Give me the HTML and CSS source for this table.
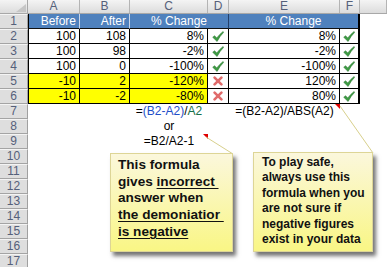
FILE: index.html
```html
<!DOCTYPE html>
<html>
<head>
<meta charset="utf-8">
<link rel="stylesheet" href="styles.css">
</head>
<body>
<div class="page">
  <div class="sheet">
    <div class="row colhead">
      <div class="corner"><span class="tri"></span></div>
      <div class="ch">A</div>
      <div class="ch">B</div>
      <div class="ch">C</div>
      <div class="ch">D</div>
      <div class="ch">E</div>
      <div class="ch">F</div>
      <div class="ch"></div>
    </div>
    <div class="row">
      <div class="rh">1</div>
      <div class="c hd sepw first">Before</div>
      <div class="c hd sepw">After</div>
      <div class="c hd span2 sepd ctr">% Change</div>
      <div class="c hd span2 last ctr">% Change</div>
      <div class="c"></div>
    </div>
    <div class="row">
      <div class="rh">2</div>
      <div class="c t first">100</div>
      <div class="c t">108</div>
      <div class="c t">8%</div>
      <div class="c t ic"><svg class="ck" viewBox="0 0 12 11"><path d="M0.7 6.3 L2.6 4.7 L4.7 7 Q7.6 3.1 11.1 0.5 L11.7 1.3 Q8 4.9 5.1 10.5 Z"/></svg></div>
      <div class="c t">8%</div>
      <div class="c t ic last"><svg class="ck" viewBox="0 0 12 11"><path d="M0.7 6.3 L2.6 4.7 L4.7 7 Q7.6 3.1 11.1 0.5 L11.7 1.3 Q8 4.9 5.1 10.5 Z"/></svg></div>
      <div class="c"></div>
    </div>
    <div class="row">
      <div class="rh">3</div>
      <div class="c t first">100</div>
      <div class="c t">98</div>
      <div class="c t">-2%</div>
      <div class="c t ic"><svg class="ck" viewBox="0 0 12 11"><path d="M0.7 6.3 L2.6 4.7 L4.7 7 Q7.6 3.1 11.1 0.5 L11.7 1.3 Q8 4.9 5.1 10.5 Z"/></svg></div>
      <div class="c t">-2%</div>
      <div class="c t ic last"><svg class="ck" viewBox="0 0 12 11"><path d="M0.7 6.3 L2.6 4.7 L4.7 7 Q7.6 3.1 11.1 0.5 L11.7 1.3 Q8 4.9 5.1 10.5 Z"/></svg></div>
      <div class="c"></div>
    </div>
    <div class="row">
      <div class="rh">4</div>
      <div class="c t first">100</div>
      <div class="c t">0</div>
      <div class="c t">-100%</div>
      <div class="c t ic"><svg class="ck" viewBox="0 0 12 11"><path d="M0.7 6.3 L2.6 4.7 L4.7 7 Q7.6 3.1 11.1 0.5 L11.7 1.3 Q8 4.9 5.1 10.5 Z"/></svg></div>
      <div class="c t">-100%</div>
      <div class="c t ic last"><svg class="ck" viewBox="0 0 12 11"><path d="M0.7 6.3 L2.6 4.7 L4.7 7 Q7.6 3.1 11.1 0.5 L11.7 1.3 Q8 4.9 5.1 10.5 Z"/></svg></div>
      <div class="c"></div>
    </div>
    <div class="row">
      <div class="rh">5</div>
      <div class="c t y first">-10</div>
      <div class="c t y">2</div>
      <div class="c t y">-120%</div>
      <div class="c t ic"><svg class="xx" viewBox="0 0 10 10"><path d="M1.6 1.6 L8.4 8.4 M8.4 1.6 L1.6 8.4"/></svg></div>
      <div class="c t">120%</div>
      <div class="c t ic last"><svg class="ck" viewBox="0 0 12 11"><path d="M0.7 6.3 L2.6 4.7 L4.7 7 Q7.6 3.1 11.1 0.5 L11.7 1.3 Q8 4.9 5.1 10.5 Z"/></svg></div>
      <div class="c"></div>
    </div>
    <div class="row">
      <div class="rh">6</div>
      <div class="c t y first">-10</div>
      <div class="c t y">-2</div>
      <div class="c t y">-80%</div>
      <div class="c t ic"><svg class="xx" viewBox="0 0 10 10"><path d="M1.6 1.6 L8.4 8.4 M8.4 1.6 L1.6 8.4"/></svg></div>
      <div class="c t">80%</div>
      <div class="c t ic last"><svg class="ck" viewBox="0 0 12 11"><path d="M0.7 6.3 L2.6 4.7 L4.7 7 Q7.6 3.1 11.1 0.5 L11.7 1.3 Q8 4.9 5.1 10.5 Z"/></svg></div>
      <div class="c"></div>
    </div>
    <div class="row">
      <div class="rh">7</div>
      <div class="c"></div>
      <div class="c"></div>
      <div class="c f ctr">=<span class="ref-b">(B2-A2)</span>/<span class="ref-a">A2</span></div>
      <div class="c"></div>
      <div class="c f ctr note">=(B2-A2)/ABS(A2)</div>
      <div class="c"></div>
      <div class="c"></div>
    </div>
    <div class="row">
      <div class="rh">8</div>
      <div class="c"></div>
      <div class="c"></div>
      <div class="c f ctr">or</div>
      <div class="c"></div><div class="c"></div><div class="c"></div><div class="c"></div>
    </div>
    <div class="row">
      <div class="rh">9</div>
      <div class="c"></div>
      <div class="c"></div>
      <div class="c f ctr note">=B2/A2-1</div>
      <div class="c"></div><div class="c"></div><div class="c"></div><div class="c"></div>
    </div>
    <div class="row"><div class="rh">10</div></div>
    <div class="row"><div class="rh">11</div></div>
    <div class="row"><div class="rh">12</div></div>
    <div class="row"><div class="rh">13</div></div>
    <div class="row"><div class="rh">14</div></div>
    <div class="row"><div class="rh">15</div></div>
    <div class="row"><div class="rh">16</div></div>
    <div class="row"><div class="rh">17</div></div>
  </div>

  <svg class="leaders" viewBox="0 0 387 267" width="387" height="267">
    <line x1="206" y1="137" x2="233" y2="154"/>
    <line x1="340" y1="106" x2="373" y2="153"/>
  </svg>

  <div class="comment c1">This formula<br>gives <u>incorrect&nbsp;</u><br>answer when<br><u>the demoniatior&nbsp;</u><br><u>is negative</u></div>
  <div class="comment c2">To play safe,<br>always use this<br>formula when you<br>are not sure if<br>negative figures<br>exist in your data</div>
</div>
</body>
</html>
```

FILE: styles.css
```css
* { box-sizing: border-box; }
html, body { margin: 0; padding: 0; background: #fff; }
body { width: 387px; height: 267px; overflow: hidden; }

.page {
  position: relative;
  width: 387px;
  height: 267px;
  overflow: hidden;
  font-family: "Liberation Sans", Arial, sans-serif;
  font-size: 12px;
  color: #000;
}

.sheet { display: flex; flex-direction: column; }

.row {
  display: grid;
  grid-template-columns: 28px 52px 50px 78px 21px 111px 20px 1fr;
  height: 15px;
}

.colhead {
  height: 14px;
  background: linear-gradient(#f4f4f4, #dcdcdc);
  border-bottom: 1px solid #a8a8a8;
}

.corner {
  position: relative;
  border-right: 1px solid #a8a8a8;
}
.corner .tri {
  position: absolute;
  right: 1px;
  bottom: 1px;
  width: 0;
  height: 0;
  border-left: 10px solid transparent;
  border-bottom: 8px solid #c6c6c6;
}

.ch {
  border-right: 1px solid #b4b4b4;
  text-align: center;
  font-size: 12px;
  line-height: 13px;
  color: #55607a;
}

.rh {
  background: #dedede;
  border-top: 1px solid #f4f4f4;
  border-bottom: 1px solid #a4a4a4;
  border-right: 1px solid #a0a0a0;
  text-align: center;
  font-size: 12px;
  line-height: 13px;
  color: #55607a;
}

.c {
  position: relative;
  line-height: 14px;
  text-align: right;
  padding-right: 3px;
  white-space: nowrap;
}

.hd {
  background: #4f81bd;
  color: #fff;
  border-bottom: 1px solid #111;
}
.sepw { border-right: 1px solid #c9d6ea; }
.sepd { border-right: 1px solid #24406a; }
.span2 { grid-column: span 2; }
.ctr { text-align: center; padding-right: 0; }

.t {
  border-right: 1px solid #000;
  border-bottom: 1px solid #000;
}
.first { border-left: 1px solid #000; }
.last { border-right: 2px solid #000; }
.y { background: #ffff00; }

.ic {
  display: flex;
  align-items: center;
  justify-content: center;
  padding-right: 0;
}
.ck { width: 12px; height: 11px; }
.ck path { fill: #3e9c44; stroke: #24702a; stroke-width: 0.5; }
.xx { width: 10px; height: 10px; }
.xx path { stroke: #e06b6b; stroke-width: 2.6; stroke-linecap: round; fill: none; }

.f { color: #000; }
.ref-b { color: #1f4fc8; }
.ref-a { color: #18704a; }

.note::after {
  content: "";
  position: absolute;
  top: 0;
  right: 0;
  width: 0;
  height: 0;
  border-top: 5px solid #e00000;
  border-left: 5px solid transparent;
}

.leaders {
  position: absolute;
  left: 0;
  top: 0;
  pointer-events: none;
}
.leaders line { stroke: #d8d08c; stroke-width: 1; }

.comment {
  position: absolute;
  background: linear-gradient(#fbf7dc, #f9f685);
  border: 1px solid #ddd596;
  box-shadow: 3px 4px 4px rgba(0, 0, 0, 0.55);
  font-weight: bold;
  color: #111;
}
.c1 {
  left: 110px;
  top: 153px;
  width: 123px;
  height: 99px;
  padding: 3px 0 0 7px;
  font-size: 13.6px;
  line-height: 16.7px;
}
.c2 {
  left: 253px;
  top: 152px;
  width: 120px;
  height: 100px;
  padding: 2px 0 0 8px;
  font-size: 12px;
  line-height: 15.4px;
}
.comment u { text-decoration-thickness: 1px; text-underline-offset: 2px; }
```
